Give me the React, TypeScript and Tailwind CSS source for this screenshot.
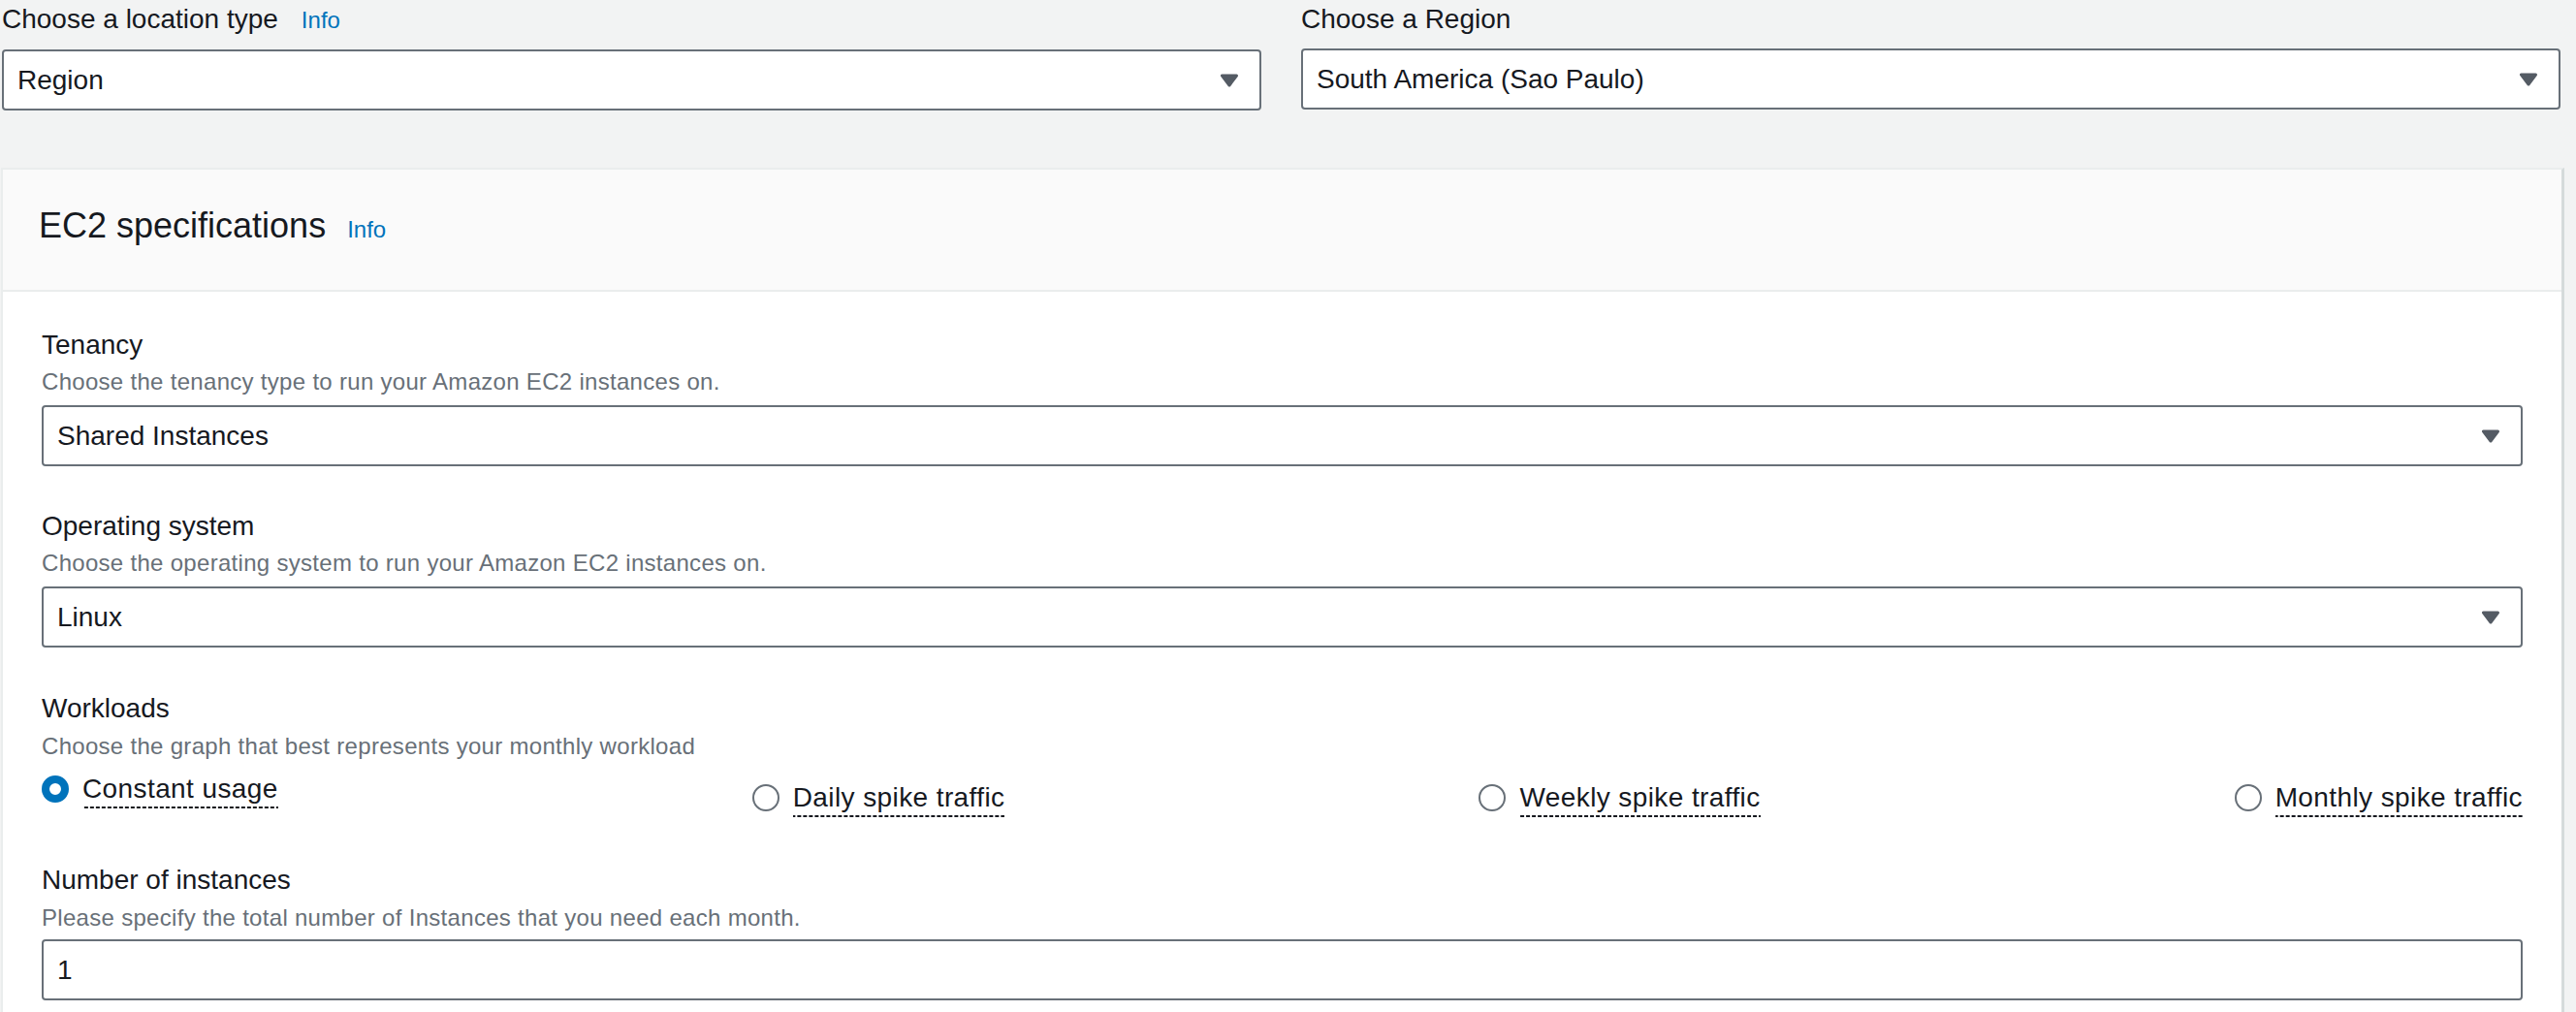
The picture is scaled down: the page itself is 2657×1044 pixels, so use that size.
import React from "react";

const FONT = { fontFamily: '"Liberation Sans", Arial, sans-serif' };

function Caret() {
  return (
    <svg width="20" height="14" viewBox="0 0 20 14" className="shrink-0">
      <path
        d="M2.5 2 L17.5 2 L10 12 Z"
        fill="#545b64"
        stroke="#545b64"
        strokeWidth="3"
        strokeLinejoin="round"
      />
    </svg>
  );
}

function Select({ value }: { value: string }) {
  return (
    <div className="flex h-[63px] items-center justify-between rounded-[4px] border-2 border-[#687078] bg-white pl-[14px] pr-[21px]">
      <span className="text-[28px] leading-[40px] text-[#16191f]">{value}</span>
      <Caret />
    </div>
  );
}

function Field({
  label,
  desc,
  children,
  className,
}: {
  label: string;
  desc: string;
  children?: React.ReactNode;
  className?: string;
}) {
  return (
    <div className={className}>
      <div className="text-[28px] leading-[40px] text-[#16191f]">{label}</div>
      <div className="mt-[2px] text-[24px] leading-[32px] tracking-[0.3px] text-[#687078]">{desc}</div>
      {children}
    </div>
  );
}

function Radio({ label, checked, className }: { label: string; checked?: boolean; className?: string }) {
  return (
    <div className={"flex items-center gap-[14px] " + (className || "")}>
      {checked ? (
        <span className="h-[28px] w-[28px] shrink-0 rounded-full border-[8px] border-[#0073bb] bg-white" />
      ) : (
        <span className="h-[28px] w-[28px] shrink-0 rounded-full border-2 border-[#687078] bg-white" />
      )}
      <span className="inline-block bg-[linear-gradient(to_right,#16191f_4px,transparent_4px)] bg-[length:6px_2px] bg-bottom bg-repeat-x text-[28px] leading-[40px] tracking-[0.4px] text-[#16191f]">
        {label}
      </span>
    </div>
  );
}

export default function App() {
  return (
    <div className="h-[1044px] w-full overflow-hidden bg-[#f2f3f3]" style={FONT}>
      <div className="grid grid-cols-2 gap-[41px] pl-[2px] pr-[16px]">
        <div>
          <div className="flex items-baseline text-[28px] leading-[40px] text-[#16191f]">
            <span>Choose a location type</span>
            <span className="ml-[24px] text-[24px] text-[#0073bb]">Info</span>
          </div>
          <div className="mt-[10px]">
            <Select value="Region" />
          </div>
        </div>
        <div>
          <div className="text-[28px] leading-[40px] text-[#16191f]">Choose a Region</div>
          <div className="mt-[10px]">
            <Select value="South America (Sao Paulo)" />
          </div>
        </div>
      </div>

      <div className="ml-[1px] mr-[12px] mt-[59px] border-l-2 border-t-2 border-r-[3px] border-l-[#eaeded] border-t-[#eaeded] border-r-[#d5dbdb] bg-white">
        <div className="flex items-baseline border-b-2 border-[#eaeded] bg-[#fafafa] pb-[44px] pl-[37px] pt-[36px]">
          <span className="text-[36px] leading-[44px] text-[#16191f]">EC2 specifications</span>
          <span className="ml-[22px] text-[24px] text-[#0073bb]">Info</span>
        </div>

        <div className="px-[40px] pb-[60px] pt-[35px]">
          <Field label="Tenancy" desc="Choose the tenancy type to run your Amazon EC2 instances on.">
            <div className="mt-[8px]">
              <Select value="Shared Instances" />
            </div>
          </Field>

          <Field
            className="mt-[42px]"
            label="Operating system"
            desc="Choose the operating system to run your Amazon EC2 instances on."
          >
            <div className="mt-[8px]">
              <Select value="Linux" />
            </div>
          </Field>

          <div className="mt-[43px]">
            <div className="text-[28px] leading-[40px] text-[#16191f]">Workloads</div>
            <div className="mt-[3px] text-[24px] leading-[32px] tracking-[0.3px] text-[#687078]">
              Choose the graph that best represents your monthly workload
            </div>
            <div className="flex items-start justify-between">
              <Radio className="mt-[8px]" label="Constant usage" checked />
              <Radio className="mt-[17px]" label="Daily spike traffic" />
              <Radio className="mt-[17px]" label="Weekly spike traffic" />
              <Radio className="mt-[17px]" label="Monthly spike traffic" />
            </div>
          </div>

          <div className="mt-[45px]">
            <div className="text-[28px] leading-[40px] text-[#16191f]">Number of instances</div>
            <div className="mt-[3px] text-[24px] leading-[32px] tracking-[0.3px] text-[#687078]">
              Please specify the total number of Instances that you need each month.
            </div>
            <div className="mt-[6px] flex h-[63px] items-center rounded-[4px] border-2 border-[#687078] bg-white pl-[14px]">
              <span className="text-[28px] leading-[40px] text-[#16191f]">1</span>
            </div>
          </div>
        </div>
      </div>
    </div>
  );
}
